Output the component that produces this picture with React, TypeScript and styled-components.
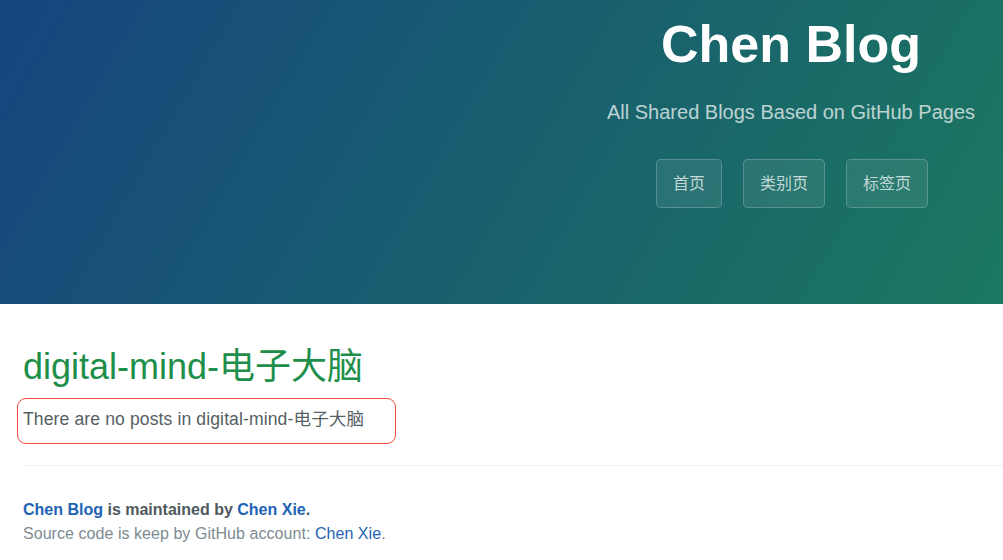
import React from 'react';
import styled, { createGlobalStyle } from 'styled-components';

const GlobalStyle = createGlobalStyle`
  html, body {
    margin: 0;
    padding: 0;
    overflow: hidden;
    background: #fff;
  }
  body {
    font-family: "Liberation Sans", "Noto Sans CJK SC", sans-serif;
    line-height: 1.5;
    color: #555f64;
  }
`;

const PAGE_WIDTH = 1582;

const Page = styled.div`
  width: ${PAGE_WIDTH}px;
`;

const PageHeader = styled.section`
  color: #fff;
  text-align: center;
  background-color: #1e8f50;
  background-image: linear-gradient(120deg, #16457f, #1e9150);
  padding: 5px 0 96px;
`;

const ProjectName = styled.h1`
  margin: 0;
  font-size: 52px;
  font-weight: bold;
  line-height: 78px;
`;

const Tagline = styled.h2`
  margin: 14px 0 0;
  font-size: 20px;
  font-weight: normal;
  line-height: 30px;
  opacity: 0.7;
`;

const NavRow = styled.nav`
  display: flex;
  justify-content: center;
  gap: 21px;
  margin-top: 32px;
  padding-left: 2px;
`;

const NavButton = styled.a`
  display: flex;
  align-items: center;
  box-sizing: border-box;
  height: 49px;
  padding: 0 16px;
  font-size: 16px;
  line-height: 24px;
  color: rgba(255, 255, 255, 0.72);
  background-color: rgba(255, 255, 255, 0.08);
  border: 1px solid rgba(255, 255, 255, 0.2);
  border-radius: 0.3rem;
  text-decoration: none;
  cursor: pointer;
`;

const MainContent = styled.main`
  padding: 36px 23px 0;
  font-size: 17.6px;
`;

const CategoryTitle = styled.h1`
  margin: 0 0 13px;
  height: 53px;
  font-size: 36px;
  font-weight: normal;
  line-height: 53px;
  color: #1e8f4a;
`;

const EmptyNotice = styled.p`
  position: relative;
  display: inline-block;
  margin: 0;
  line-height: 26px;
  letter-spacing: 0.1px;

  /* red annotation box drawn over the notice */
  &::after {
    content: '';
    position: absolute;
    top: -8px;
    bottom: -12px;
    left: -6px;
    right: -32px;
    border: 1.5px solid #ee4a40;
    border-radius: 9px;
    pointer-events: none;
  }
`;

const SiteFooter = styled.footer`
  margin-top: 33px;
  padding-top: 32px;
  border-top: 1px solid #eff0f1;
  font-size: 16px;
  line-height: 24px;
`;

const FooterOwner = styled.span`
  display: block;
  font-weight: bold;
  color: #4f595e;
`;

const FooterCredits = styled.span`
  display: block;
  color: #7d8b91;
  letter-spacing: 0.05px;
`;

const Link = styled.a`
  color: #1e63b4;
  text-decoration: none;
`;

const NAV_ITEMS = ['首页', '类别页', '标签页'];
const CATEGORY = 'digital-mind-电子大脑';

export default function App() {
  return (
    <>
      <GlobalStyle />
      <Page>
        <PageHeader>
          <ProjectName>Chen Blog</ProjectName>
          <Tagline>All Shared Blogs Based on GitHub Pages</Tagline>
          <NavRow>
            {NAV_ITEMS.map(item => (
              <NavButton key={item}>{item}</NavButton>
            ))}
          </NavRow>
        </PageHeader>

        <MainContent>
          <CategoryTitle>{CATEGORY}</CategoryTitle>
          <EmptyNotice>There are no posts in {CATEGORY}</EmptyNotice>

          <SiteFooter>
            <FooterOwner>
              <Link>Chen Blog</Link> is maintained by <Link>Chen Xie</Link>.
            </FooterOwner>
            <FooterCredits>
              Source code is keep by GitHub account: <Link>Chen Xie</Link>.
            </FooterCredits>
          </SiteFooter>
        </MainContent>
      </Page>
    </>
  );
}
